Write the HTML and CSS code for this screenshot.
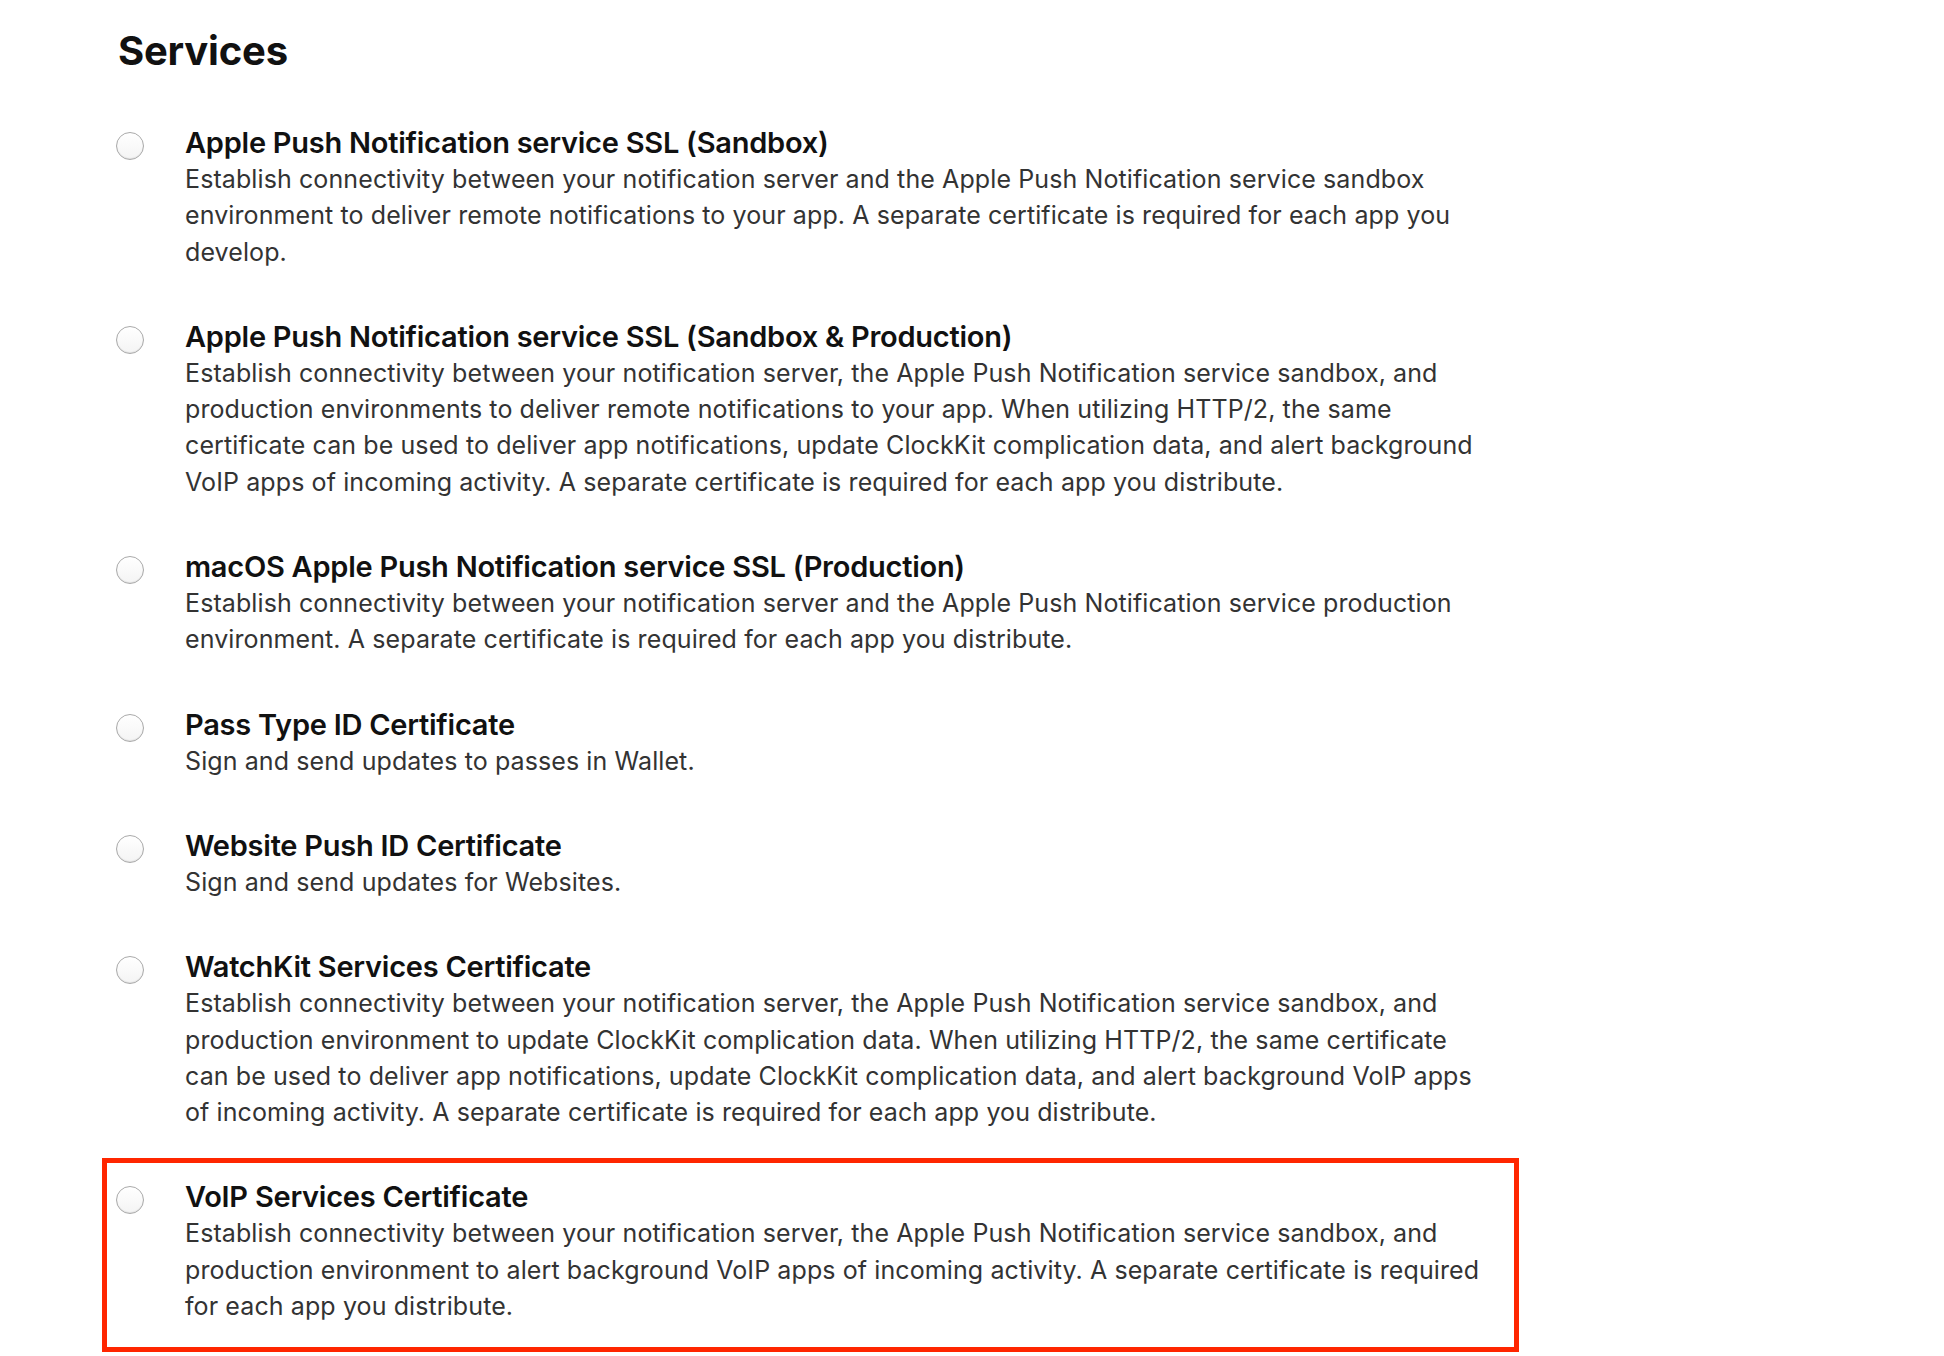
FILE: index.html
```html
<!DOCTYPE html>
<html>
<head>
    <meta charset="UTF-8">
    <title>Services</title>
    <link rel="stylesheet" href="styles.css">
</head>
<body>
<div id="page">
    <h2 class="heading">Services</h2>
    <ul class="services">
        <li class="service">
            <span class="radio"></span>
            <div class="info">
                <div class="title">Apple Push Notification service SSL (Sandbox)</div>
                <div class="desc">Establish connectivity between your notification server and the Apple Push Notification service sandbox environment to deliver remote notifications to your app. A separate certificate is required for each app you develop.</div>
            </div>
        </li>
        <li class="service">
            <span class="radio"></span>
            <div class="info">
                <div class="title">Apple Push Notification service SSL (Sandbox &amp; Production)</div>
                <div class="desc">Establish connectivity between your notification server, the Apple Push Notification service sandbox, and production environments to deliver remote notifications to your app. When utilizing HTTP/2, the same certificate can be used to deliver app notifications, update ClockKit complication data, and alert background VoIP apps of incoming activity. A separate certificate is required for each app you distribute.</div>
            </div>
        </li>
        <li class="service">
            <span class="radio"></span>
            <div class="info">
                <div class="title">macOS Apple Push Notification service SSL (Production)</div>
                <div class="desc">Establish connectivity between your notification server and the Apple Push Notification service production environment. A separate certificate is required for each app you distribute.</div>
            </div>
        </li>
        <li class="service">
            <span class="radio"></span>
            <div class="info">
                <div class="title">Pass Type ID Certificate</div>
                <div class="desc">Sign and send updates to passes in Wallet.</div>
            </div>
        </li>
        <li class="service">
            <span class="radio"></span>
            <div class="info">
                <div class="title">Website Push ID Certificate</div>
                <div class="desc">Sign and send updates for Websites.</div>
            </div>
        </li>
        <li class="service">
            <span class="radio"></span>
            <div class="info">
                <div class="title">WatchKit Services Certificate</div>
                <div class="desc">Establish connectivity between your notification server, the Apple Push Notification service sandbox, and production environment to update ClockKit complication data. When utilizing HTTP/2, the same certificate can be used to deliver app notifications, update ClockKit complication data, and alert background VoIP apps of incoming activity. A separate certificate is required for each app you distribute.</div>
            </div>
        </li>
        <li class="service marked">
            <span class="radio"></span>
            <div class="info">
                <div class="title">VoIP Services Certificate</div>
                <div class="desc">Establish connectivity between your notification server, the Apple Push Notification service sandbox, and production environment to alert background VoIP apps of incoming activity. A separate certificate is required for each app you distribute.</div>
            </div>
        </li>
    </ul>
</div>
</body>
</html>
```

FILE: styles.css
```css
body {
    margin: 0;
    background-color: #fff;
    font-family: Inter, "Noto Sans", sans-serif;
}

#page {
    padding: 27px 0px 0px 102px;
    width: 1417px;
}

.heading {
    margin: 0px 0px 29px 16px;
    font-size: 40px;
    line-height: 48px;
    font-weight: 700;
    letter-spacing: -0.2px;
    color: #111;
}

.services {
    list-style: none;
    margin: 0px;
    padding: 0px;
}

.service {
    display: flex;
    gap: 41px;
    padding: 16px 24px 23px 9px;
    border: 5px solid transparent;
}

.service.marked {
    border-color: #ff2600;
}

.radio {
    flex: none;
    width: 26px;
    height: 26px;
    margin-top: 7px;
    border: 1px solid #aaa;
    border-radius: 50%;
    background: linear-gradient(#fff, #f4f4f4);
    box-shadow: inset 0px -1px 1px rgba(0, 0, 0, 0.08);
}

.info {
    flex: 1;
}

.title {
    font-size: 29px;
    line-height: 36px;
    font-weight: 600;
    letter-spacing: -0.25px;
    color: #111;
}

.desc {
    font-size: 25px;
    line-height: 36.3px;
    letter-spacing: 0.1px;
    color: #333;
}
```
